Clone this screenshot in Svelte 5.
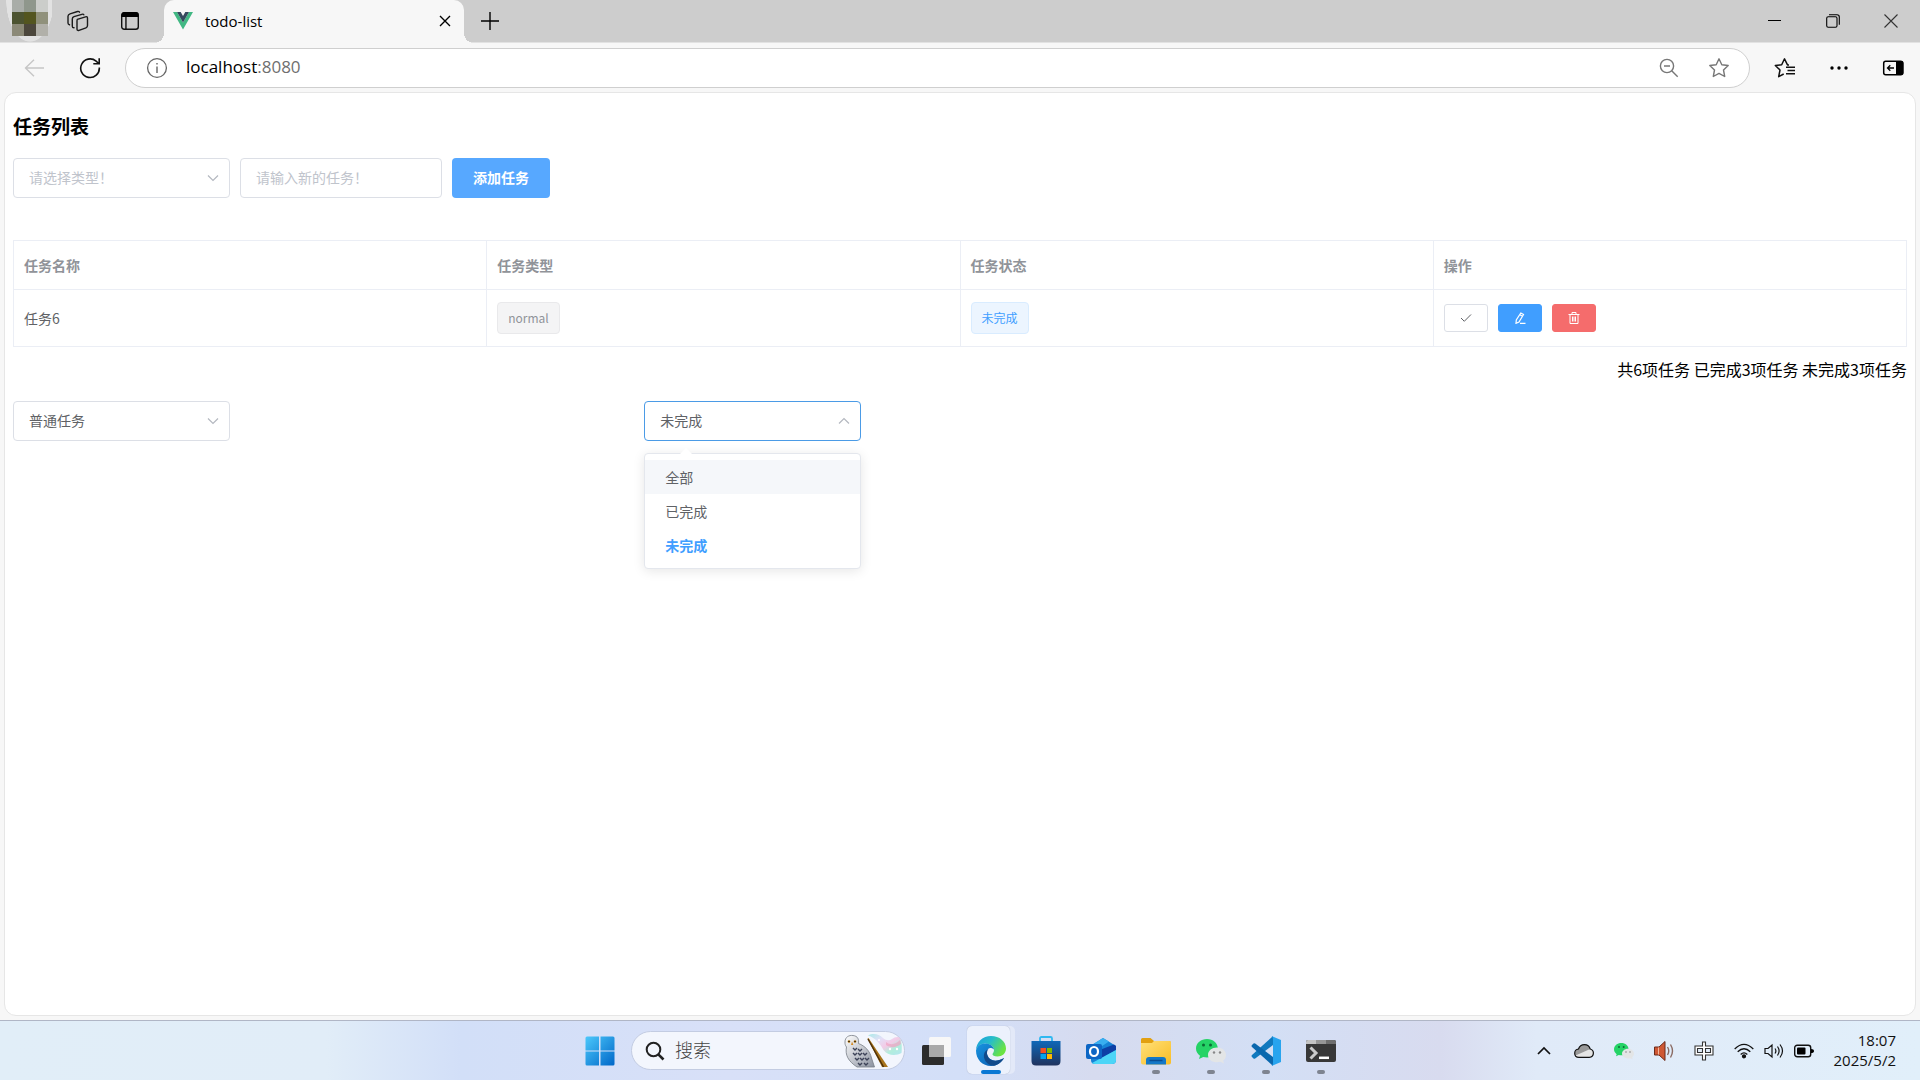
<script lang="ts">
    type Task = { id: number; name: string; type: string; done: boolean };

    let tasks = $state<Task[]>([
        { id: 1, name: '任务1', type: 'urgent', done: true },
        { id: 2, name: '任务2', type: 'normal', done: true },
        { id: 3, name: '任务3', type: 'urgent', done: true },
        { id: 4, name: '任务4', type: 'urgent', done: false },
        { id: 5, name: '任务5', type: 'urgent', done: false },
        { id: 6, name: '任务6', type: 'normal', done: false }
    ]);

    const types = [
        { value: 'normal', label: '普通任务' },
        { value: 'urgent', label: '紧急任务' }
    ];
    const statuses = ['全部', '已完成', '未完成'];

    let newType = $state('');
    let newName = $state('');
    let typeFilter = $state('normal');
    let statusFilter = $state('未完成');
    let hovered = $state('全部');
    let open = $state(true);

    const visible = $derived(
        tasks.filter(
            (t) =>
                t.type === typeFilter &&
                (statusFilter === '全部' || t.done === (statusFilter === '已完成'))
        )
    );
    const doneCount = $derived(tasks.filter((t) => t.done).length);

    function addTask() {
        if (!newType || !newName.trim()) return;
        tasks.push({ id: Date.now(), name: newName.trim(), type: newType, done: false });
        newName = '';
    }

    function removeTask(id: number) {
        tasks = tasks.filter((t) => t.id !== id);
    }

    function pick(status: string) {
        statusFilter = status;
        open = false;
    }

    function toggleMenu(e: MouseEvent) {
        e.preventDefault();
        open = !open;
    }

    // colores del avatar, fila por fila
    const avatar = ['#a9ada8', '#8f978c', '#cbcdca', '#4c5330', '#53551f', '#90917b', '#8b8977', '#4c473c', '#b1b0a9'];
</script>

{#snippet arrow(up = false)}
    <svg class="arrow" class:up viewBox="0 0 14 14" aria-hidden="true">
        <path d="M2 4.500l5 5 5-5" fill="none" stroke="#b4b8c0" stroke-width="1.200" />
    </svg>
{/snippet}

{#snippet wechat(size: number)}
    <svg width={size} height={size} viewBox="0 0 30 30" aria-hidden="true">
        <path d="M11 3C5 3 0 7 0 12.500c0 3 1.500 5.500 4 7.200L3 23l4.200-2c1.200.3 2.500.5 3.800.5 6 0 10.800-4 10.800-9.200S17 3 11 3z" fill="#25d366" />
        <circle cx="7.500" cy="9" r="1.500" fill="#0b6b35" />
        <circle cx="14.500" cy="9" r="1.500" fill="#0b6b35" />
        <path d="M21 11.500c-5 0-9 3.200-9 7.400s4 7.400 9 7.400c1.200 0 2.300-.2 3.300-.5L28 27.500l-.8-3c1.800-1.400 2.800-3.300 2.800-5.600 0-4.200-4-7.400-9-7.400z" fill="#e3e5e6" />
        <circle cx="18" cy="16.500" r="1.200" fill="#888" />
        <circle cx="24" cy="16.500" r="1.200" fill="#888" />
    </svg>
{/snippet}

<div class="screen">
    <header class="tabbar">
        <div class="profile">
            <div class="avatar">
                {#each avatar as color}
                    <i style:background={color}></i>
                {/each}
            </div>
        </div>
        <button class="tab-btn" aria-label="工作区">
            <svg width="22" height="22" viewBox="0 0 22 22" fill="none" stroke="#1b1b1b" stroke-width="1.400" stroke-linejoin="round" stroke-linecap="round">
                <path d="M10.300 9.400l8.200-2.600q2-.6 2 1.400v7.400q0 1.700-1.500 2.200l-7 2.500q-2 .6-2-1.300v-7.600q0-1.600.3-2z" />
                <path d="M16.800 4.800q-.4-1-2-.5L7 6.700Q5.300 7.300 5.300 9v7.200q0 1.500 1.700 1.600" />
                <path d="M12.500 2.200q-.6-1.100-2-.7L3 3.800Q1 4.400 1 6.300v6.800q0 1.300 1.500 1.700" />
            </svg>
        </button>
        <button class="tab-btn" aria-label="标签操作菜单">
            <svg width="20" height="20" viewBox="0 0 20 20">
                <rect x="1.700" y="1.700" width="16.600" height="16.600" rx="2.500" fill="none" stroke="#111" stroke-width="1.400" />
                <path d="M1.500 6V4a3 3 0 0 1 3-3h11a3 3 0 0 1 3 3v2zM5.300 6h1.300v12H5.300z" fill="#000" />
            </svg>
        </button>
        <div class="tab">
            <svg width="20" height="18" viewBox="0 0 20 18" aria-hidden="true">
                <path d="M0 0h4l6 10.500L16 0h4L10 17.500z" fill="#41b883" />
                <path d="M4 0h3.700L10 4l2.300-4H16l-6 10.500z" fill="#35495e" />
            </svg>
            <span>todo-list</span>
            <button aria-label="关闭标签页">
                <svg width="12" height="12" viewBox="0 0 12 12"><path d="M1 1l10 10M11 1L1 11" stroke="#000" stroke-width="1.400" /></svg>
            </button>
        </div>
        <button class="tab-btn" aria-label="新建标签页">
            <svg width="18" height="18" viewBox="0 0 18 18"><path d="M9 0v18M0 9h18" stroke="#000" stroke-width="1.400" /></svg>
        </button>
        <div class="window-controls">
            <button aria-label="最小化">
                <svg width="14" height="14" viewBox="0 0 14 14"><path d="M0 6.500h13" stroke="#000" /></svg>
            </button>
            <button aria-label="还原">
                <svg width="14" height="14" viewBox="0 0 14 14" fill="none" stroke="#000" stroke-width="1.100">
                    <rect x=".7" y="2.700" width="10.300" height="10.500" rx="1.500" />
                    <path d="M3 .7h8q2.300 0 2.300 2.300v7.800" />
                </svg>
            </button>
            <button aria-label="关闭">
                <svg width="14" height="14" viewBox="0 0 14 14"><path d="M.5.500l13 13M13.500.500l-13 13" stroke="#333" stroke-width="1.100" /></svg>
            </button>
        </div>
    </header>

    <div class="toolbar">
        <button class="nav-btn" aria-label="后退" disabled>
            <svg width="20" height="18" viewBox="0 0 20 18" fill="none" stroke="#c6c6c6" stroke-width="1.400"><path d="M20 9H1.500M10 .7L1.500 9l8.500 8.300" /></svg>
        </button>
        <button class="nav-btn" aria-label="刷新">
            <svg width="22" height="22" viewBox="0 0 22 22" fill="none" stroke="#111" stroke-width="1.600"><path d="M20.300 10.500a9.300 9.300 0 1 1-3.200-6.300l2.600 2.300M20.200 1.200v5.600h-5.900" /></svg>
        </button>
        <div class="address">
            <svg width="22" height="22" viewBox="0 0 22 22" fill="none" stroke="#666" aria-hidden="true">
                <circle cx="11" cy="11" r="9.400" stroke-width="1.300" />
                <path d="M11 9.500v6.500M11 6v1.600" stroke-width="1.400" />
            </svg>
            <span class="url">localhost<span class="port">:8080</span></span>
            <button aria-label="缩小">
                <svg width="20" height="20" viewBox="0 0 20 20" fill="none" stroke="#777" stroke-width="1.400"><circle cx="8" cy="8" r="6.600" /><path d="M5 8h6M12.700 12.700l6 6" /></svg>
            </button>
            <button aria-label="收藏此页">
                <svg width="22" height="22" viewBox="0 0 22 22" fill="none" stroke="#777" stroke-width="1.400" stroke-linejoin="round"><path d="M11 1.800l2.800 5.900 6.400.8-4.700 4.500 1.200 6.500L11 16.400l-5.700 3.100 1.200-6.500L1.800 8.500l6.400-.8z" /></svg>
            </button>
        </div>
        <button class="tool-btn" aria-label="收藏夹">
            <svg width="22" height="22" viewBox="0 0 22 22" fill="none" stroke="#111" stroke-width="1.500" stroke-linejoin="round"><path d="M15 7.900h-1.500L10.500 1.800 7.700 7.700l-6.400.8L6 13l-1.300 6.700 5-2.700M12 10.300h9M13.500 13.500H21M12 16.700h9" /></svg>
        </button>
        <button class="tool-btn" aria-label="设置及其他">
            <svg width="18" height="4" viewBox="0 0 18 4"><circle cx="2" cy="2" r="1.700" /><circle cx="9" cy="2" r="1.700" /><circle cx="16" cy="2" r="1.700" /></svg>
        </button>
        <button class="tool-btn" aria-label="侧边栏">
            <svg width="22" height="16" viewBox="0 0 22 16"><rect x="1.700" y="1.200" width="19" height="13.600" rx="2" fill="none" stroke="#000" stroke-width="1.500" /><path d="M14 1h5.500a2 2 0 0 1 2 2v10a2 2 0 0 1-2 2H14z" /><path d="M12 8H5.500M8.300 5.200L5.500 8l2.800 2.800" fill="none" stroke="#000" stroke-width="1.300" /></svg>
        </button>
    </div>

    <main class="page">
        <h3>任务列表</h3>

        <form class="new-task" onsubmit={(e) => { e.preventDefault(); addTask(); }}>
            <div class="select">
                <select bind:value={newType} class:empty={!newType} aria-label="任务类型">
                    <option value="" disabled hidden>请选择类型！</option>
                    {#each types as t}
                        <option value={t.value}>{t.label}</option>
                    {/each}
                </select>
                {@render arrow()}
            </div>
            <input type="text" bind:value={newName} placeholder="请输入新的任务！" aria-label="新的任务" />
            <button type="submit" class="btn-add">添加任务</button>
        </form>

        <table>
            <thead>
                <tr>
                    <th>任务名称</th>
                    <th>任务类型</th>
                    <th>任务状态</th>
                    <th>操作</th>
                </tr>
            </thead>
            <tbody>
                {#each visible as task (task.id)}
                    <tr>
                        <td>{task.name}</td>
                        <td><span class="tag info">{task.type}</span></td>
                        <td><span class="tag">{task.done ? '已完成' : '未完成'}</span></td>
                        <td>
                            <div class="actions">
                                <button aria-label="完成" onclick={() => (task.done = true)}>
                                    <svg width="12" height="12" viewBox="0 0 12 12" fill="none" stroke="#606266"><path d="M1 6l3.300 3.300L11 2.500" /></svg>
                                </button>
                                <button class="primary" aria-label="编辑">
                                    <svg width="12" height="12" viewBox="0 0 12 12" fill="none" stroke="#fff" stroke-width="1.200"><path d="M6.800 1l2.700 1.500L5 10l-3 1.300.3-3.300zM5.800 2.800L8.500 4.300M6 11.400h5.500" /></svg>
                                </button>
                                <button class="danger" aria-label="删除" onclick={() => removeTask(task.id)}>
                                    <svg width="12" height="12" viewBox="0 0 12 12" fill="none" stroke="#fff"><path d="M.5 2.500h11M4 2.500v-2h4v2M2 2.500v9h8v-9M4.500 4.500v5M6 4.500v5M7.500 4.500v5" /></svg>
                                </button>
                            </div>
                        </td>
                    </tr>
                {/each}
            </tbody>
        </table>

        <p class="summary">
            共{tasks.length}项任务 已完成{doneCount}项任务 未完成{tasks.length - doneCount}项任务
        </p>

        <div class="filters">
            <div class="select">
                <select bind:value={typeFilter} aria-label="按类型筛选">
                    {#each types as t}
                        <option value={t.value}>{t.label}</option>
                    {/each}
                </select>
                {@render arrow()}
            </div>
            <div class="select" class:open>
                <select bind:value={statusFilter} onmousedown={toggleMenu} aria-label="按状态筛选">
                    {#each statuses as s}
                        <option value={s}>{s}</option>
                    {/each}
                </select>
                {@render arrow(open)}
                {#if open}
                    <div class="popper">
                        {#each statuses as s}
                            <button
                                class:hover={hovered === s}
                                class:selected={statusFilter === s}
                                onmouseenter={() => (hovered = s)}
                                onclick={() => pick(s)}
                            >{s}</button>
                        {/each}
                    </div>
                {/if}
            </div>
        </div>
    </main>

    <footer class="taskbar">
        <div class="dock">
            <button class="app" aria-label="开始">
                <svg width="30" height="30" viewBox="0 0 30 30">
                    <defs><linearGradient id="win" x1="0" y1="0" x2="1" y2="1"><stop offset="0" stop-color="#4cc8fb" /><stop offset="1" stop-color="#0067c8" /></linearGradient></defs>
                    <path d="M2 .5h12v14H.5V2Q.5.500 2 .5zM15.500.500H28q1.500 0 1.500 1.500v12.500h-14zM.5 15.500H14v14H2q-1.500 0-1.500-1.500zM15.500 15.500h14V28q0 1.500-1.500 1.500H15.500z" fill="url(#win)" />
                </svg>
            </button>
            <label class="search">
                <svg width="20" height="20" viewBox="0 0 20 20" fill="none" stroke="#222" stroke-width="2"><circle cx="8.500" cy="8.500" r="6.800" /><path d="M13.300 13.300l5.200 5.200" stroke-width="2.600" /></svg>
                <input type="text" placeholder="搜索" aria-label="搜索" />
                <svg width="60" height="34" viewBox="0 0 60 34">
                    <defs>
                        <linearGradient id="magic" x1="0" y1="0" x2="1" y2="1"><stop offset="0" stop-color="#9ee8e4" /><stop offset=".3" stop-color="#e0dcf6" /><stop offset=".55" stop-color="#f3c3e2" /><stop offset=".75" stop-color="#a6ecd6" /><stop offset="1" stop-color="#a8e2ee" /></linearGradient>
                        <linearGradient id="owl" x1="0" y1="0" x2="1" y2="1"><stop offset="0" stop-color="#fff" /><stop offset="1" stop-color="#8b92a0" /></linearGradient>
                    </defs>
                    <path d="M2 8C2 3 6 1 10 1.500c5 .5 6 4 5.500 8C22 12 27 17 28.500 24l3 9H14C5 27 2 21 3.500 13 2 11 2 10 2 8z" fill="url(#owl)" stroke="#777d87" stroke-width=".8" />
                    <path d="M9 7.500l1.400 3.500H8z" fill="#d48a22" />
                    <circle cx="6" cy="7.500" r="1.300" fill="#c8861b" /><circle cx="12" cy="7.500" r="1.300" fill="#c8861b" />
                    <circle cx="6" cy="7.500" r=".7" /><circle cx="12" cy="7.500" r=".7" />
                    <path d="M10 14l2 2 2-2M15 15l2 2 2-2M10 19l2 2 2-2M15 19l2 2 2-2M20 19l2 2 2-2M12 24l2 2 2-2M17 24l2 2 2-2M22 24l2 2 2-2M15 29l2 2 2-2M21 29l2 2 2-2" fill="none" stroke="#3d4358" stroke-width="1.400" />
                    <path d="M25 1.500c6-3 11-1 15 2.500 3 2.500 6 3 9 1 2.500-2 6-3 8-1 2 4 2 10 1.500 15-5 3-14 3-18-3-3-6-8-12-15.500-14.500z" fill="url(#magic)" opacity=".85" />
                    <path d="M43 8c5 4 10 2 14-2l1 4c-5 4-10 4-15 1z" fill="#f09bbd" opacity=".6" />
                    <circle cx="47" cy="15" r="1.200" fill="#fff" /><circle cx="54" cy="15" r="1.200" fill="#fff" /><circle cx="36" cy="6" r="1" fill="#fff" />
                    <path d="M24.500 4.500L39 33h6L25.500 4z" fill="#a8741b" /><path d="M25 5L40.500 33" stroke="#4e310b" stroke-width="1.500" />
                </svg>
            </label>
            <button class="app" aria-label="任务视图">
                <svg width="30" height="30" viewBox="0 0 30 30">
                    <rect x="1" y="9" width="22" height="20" rx="1.500" fill="#2c2c2c" />
                    <rect x="8" y="1" width="22" height="20" rx="1.500" fill="#f7f7f7" />
                    <path d="M8 9h15v12H9.500Q8 21 8 19.500z" fill="#a9a9a9" />
                </svg>
            </button>
            <button class="app active" aria-label="Edge">
                <svg width="30" height="30" viewBox="0 0 30 30">
                    <defs>
                        <linearGradient id="edge1" x1="0" y1="0" x2="1" y2=".5"><stop offset="0" stop-color="#1b9ddf" /><stop offset=".5" stop-color="#27bdc9" /><stop offset="1" stop-color="#6ae443" /></linearGradient>
                        <linearGradient id="edge2" x1="0" y1="0" x2="1" y2="1"><stop offset="0" stop-color="#1794e0" /><stop offset="1" stop-color="#0b57ad" /></linearGradient>
                    </defs>
                    <path d="M15 0c8.500 0 15 5.500 15 12.500 0 5-4 8-8.500 8-3.500 0-5-1.200-5-2.300 0-1 1.500-1.700 1.500-4.200C18 10.500 14 7.500 9 7.500 4.500 7.500 1 10.500 0 14.500 0 6 7 0 15 0z" fill="url(#edge1)" />
                    <path d="M0 14.500C1 10 4.500 7.500 9 7.500c5 0 8.500 2.700 9 6-5.500-4-8.500 1-6.500 6C13.500 25 20 26.500 28 22c-3 5-7.500 8-13 8C6.500 30 0 23.500 0 14.500z" fill="url(#edge2)" />
                    <path d="M11.500 19.500C10.500 17 11 14.500 12.500 13c-4 1.500-5.500 6-4 10 1.500 4 5 6.500 9 6.800C22 29 26 26 28 22c-8 4.500-14.500 3-16.500-2.500z" fill="#114a8b" />
                </svg>
            </button>
            <button class="app" aria-label="Microsoft Store">
                <svg width="30" height="30" viewBox="0 0 30 30">
                    <defs><linearGradient id="store" x1="0" y1="0" x2="0" y2="1"><stop offset="0" stop-color="#0f68b8" /><stop offset="1" stop-color="#20335e" /></linearGradient></defs>
                    <path d="M9 6V2.500Q9 1 10.500 1h9Q21 1 21 2.500V6" fill="none" stroke="#2fb8f0" stroke-width="1.800" />
                    <path d="M.5 5h29v20q0 4.500-4.500 4.500H5Q.5 29.500.5 25z" fill="url(#store)" />
                    <path d="M9.500 12H15v5H9.500z" fill="#f25022" /><path d="M16 12h5v5h-5z" fill="#7fba00" /><path d="M9.500 18H15v5H9.500z" fill="#00a4ef" /><path d="M16 18h5v5h-5z" fill="#ffb900" />
                </svg>
            </button>
            <button class="app" aria-label="Outlook">
                <svg width="30" height="30" viewBox="0 0 30 30">
                    <path d="M5 9.500L17 2l13 8v14q0 4-4 4H9q-4 0-4-4z" fill="#1683d6" />
                    <path d="M5 9.500L17 2l6 3.500L10 14z" fill="#38aef0" />
                    <path d="M11 15L28 8.500l2 1.500v4L14 23z" fill="#0d3fa5" />
                    <path d="M30 14v10q0 4-4 4H9q-2 0-3-1z" fill="#4cd5f7" />
                    <rect y="8" width="16" height="15" rx="2" fill="#0d66c4" />
                    <ellipse cx="8" cy="15.500" rx="4" ry="4.500" fill="none" stroke="#fff" stroke-width="2.200" />
                </svg>
            </button>
            <button class="app running" aria-label="文件资源管理器">
                <svg width="30" height="30" viewBox="0 0 30 30">
                    <defs><linearGradient id="folder" x1="0" y1="0" x2="1" y2="1"><stop offset="0" stop-color="#ffe07a" /><stop offset="1" stop-color="#f9bd25" /></linearGradient></defs>
                    <path d="M0 3.500Q0 2 1.500 2h8L13 5h15q2 0 2 2v5H0z" fill="#e2a011" />
                    <path d="M0 7h11l2-2h15.500Q30 5 30 6.500v20Q30 28.500 28 28.500H2q-2 0-2-2z" fill="url(#folder)" />
                    <path d="M5 28.500V24q0-3 3-3h14q3 0 3 3v4.500z" fill="#1478c7" /><path d="M8.500 24.500h13" stroke="#0a4d92" stroke-width="1.500" />
                </svg>
            </button>
            <button class="app running" aria-label="微信">{@render wechat(30)}</button>
            <button class="app running" aria-label="Visual Studio Code">
                <svg width="30" height="30" viewBox="0 0 30 30">
                    <path d="M22 0L1 19q-1 1 0 2l1.500 1.500q.8.600 1.700 0L22 9z" fill="#1079be" />
                    <path d="M22 30L1 11q-1-1 0-2l1.500-1.500q.8-.6 1.700 0L22 21z" fill="#0a68ae" />
                    <path d="M20.500 0L30 4v22l-9.500 4q1.500-1 1.500-3V3q0-2-1.500-3z" fill="#28a4ee" />
                </svg>
            </button>
            <button class="app running" aria-label="终端">
                <svg width="30" height="30" viewBox="0 0 30 30">
                    <rect y="4" width="30" height="22" rx="2" fill="#383838" />
                    <path d="M2 4h8v4H0V6q0-2 2-2z" fill="#c4c4c4" /><path d="M10 4h10v4H10z" fill="#969696" /><path d="M20 4h8q2 0 2 2v2H20z" fill="#6e6e6e" />
                    <path d="M4.500 11.500L10 17l-5.500 5.500" fill="none" stroke="#ccc" stroke-width="3" /><path d="M13 21.800h10" stroke="#fff" stroke-width="2.500" />
                </svg>
            </button>
        </div>
        <div class="tray">
            <button aria-label="显示隐藏的图标">
                <svg width="14" height="10" viewBox="0 0 14 10"><path d="M1 8l6-6 6 6" fill="none" stroke="#111" stroke-width="1.700" /></svg>
            </button>
            <button aria-label="OneDrive">
                <svg width="20" height="14" viewBox="0 0 20 14"><path d="M4.500 5C5.500 2 8 .7 10.500.700c3 0 5 1.800 5.700 4.300 2 .5 3.200 2 3.200 4.100 0 2.500-1.800 4.200-4.200 4.200H5C2.500 13.300.700 11.500.700 9.200.700 7 2.300 5.300 4.500 5z" fill="#e5e5e5" /><path d="M4.500 5C5.500 2 8 .7 10.500.700c3 0 5 1.800 5.700 4.300L1.500 11.500C.2 9 1.500 5.500 4.500 5z" fill="#999" /><path d="M4.500 5C5.500 2 8 .7 10.500.700c3 0 5 1.800 5.700 4.300 2 .5 3.200 2 3.200 4.100 0 2.500-1.800 4.200-4.200 4.200H5C2.500 13.300.700 11.500.700 9.200.700 7 2.300 5.300 4.500 5z" fill="none" stroke="#111" stroke-width="1.200" /></svg>
            </button>
            <button aria-label="微信">{@render wechat(20)}</button>
            <button aria-label="音频">
                <svg width="20" height="20" viewBox="0 0 20 20"><path d="M.5 6H5l6-5.500v19L5 14H.5z" fill="#cf5834" stroke="#6b2b1b" /><path d="M4.500 6.500v7" stroke="#f3b79c" /><path d="M13.500 6q2.500 4 0 8M16.500 3.500q4 6.500 0 13" fill="none" stroke="#8a6a62" stroke-width="1.400" /></svg>
            </button>
            <button aria-label="输入法">
                <svg width="20" height="20" viewBox="0 0 20 20" fill="#fff" stroke="#333" stroke-width="1.100" fill-rule="evenodd"><path d="M8.500 1h3v4H19v9h-7.500v5h-3v-5H1V5h7.500zM3.500 7.500v4h5v-4zM11.500 7.500v4h5v-4z" /></svg>
            </button>
            <div class="system">
                <svg width="20" height="16" viewBox="0 0 20 16" fill="none" stroke="#111" stroke-width="1.300" aria-label="WLAN"><path d="M.7 6q9.300-9.300 18.600 0M3.700 8.800q6.300-6.200 12.600 0M6.700 11.500q3.300-3.200 6.600 0" /><circle cx="10" cy="13.300" r="1.500" fill="#111" /></svg>
                <svg width="20" height="16" viewBox="0 0 20 16" fill="none" stroke="#111" stroke-width="1.200" aria-label="音量"><path d="M1 5.500h3L8 2v12L4 10.500H1zM11 5.500q1.800 2.500 0 5M13.500 3.500q3.200 4.500 0 9M16 1.500q5 6.500 0 13" /></svg>
                <svg width="20" height="14" viewBox="0 0 20 14" aria-label="电池"><rect x=".7" y="1.200" width="16" height="11.600" rx="2.500" fill="none" stroke="#111" stroke-width="1.400" /><rect x="3" y="3.500" width="8.500" height="7" rx="1" /><path d="M17 5q3 0 3 2t-3 2z" /></svg>
            </div>
            <time datetime="2025-05-02T18:07">18:07<br />2025/5/2</time>
        </div>
    </footer>
</div>

<style>
    :global(body) {
        margin: 0;
        background: #f7f7f7;
    }

    .screen {
        display: flex;
        flex-direction: column;
        min-height: 100vh;
        font-family: 'Noto Sans', 'Noto Sans CJK SC', sans-serif;
    }

    button,
    input,
    select {
        box-sizing: border-box;
        margin: 0;
        font-family: inherit;
    }

    button {
        display: flex;
        align-items: center;
        justify-content: center;
        padding: 0;
        border: 0;
        background: none;
        cursor: pointer;
    }

    svg {
        display: block;
        flex: none;
    }

    /* navegador */
    .tabbar {
        display: flex;
        height: 42px;
        background: #cdcdcd;
        border-bottom: 1px solid #e2e2e2;
    }

    .profile {
        width: 52px;
        background: radial-gradient(ellipse 24px 42px at 30px 0, #e2e2e2 98%, transparent);
    }

    .avatar {
        display: grid;
        grid-template-columns: repeat(3, 12px);
        grid-auto-rows: 12px;
        margin-left: 12px;
    }

    .tab-btn {
        width: 52px;
    }

    .tab {
        position: relative;
        display: flex;
        align-items: center;
        width: 300px;
        height: 43px;
        margin-left: 8px;
        padding: 0 13px 2px 9px;
        box-sizing: border-box;
        background: #f7f7f7;
        border-radius: 10px 10px 0 0;
        font-family: 'Open Sans', sans-serif;
        font-size: 15px;
    }

    .tab::before,
    .tab::after {
        content: '';
        position: absolute;
        bottom: 0;
        width: 10px;
        height: 10px;
    }

    .tab::before {
        right: 100%;
        background: radial-gradient(circle at 0 0, transparent 10px, #f7f7f7 10px);
    }

    .tab::after {
        left: 100%;
        background: radial-gradient(circle at 100% 0, transparent 10px, #f7f7f7 10px);
    }

    .tab span {
        flex: 1;
        padding-left: 12px;
    }

    .window-controls {
        display: flex;
        margin-left: auto;
    }

    .window-controls button {
        width: 58px;
    }

    .toolbar {
        display: flex;
        align-items: center;
        height: 49px;
        padding-left: 6px;
    }

    .nav-btn {
        width: 56px;
        height: 40px;
    }

    .address {
        display: flex;
        flex: 1;
        align-items: center;
        box-sizing: border-box;
        height: 40px;
        margin: 0 8px 0 7px;
        padding: 0 5px 0 20px;
        background: #fff;
        border: 1px solid #cfcfcf;
        border-radius: 20px;
        font-family: 'Open Sans', sans-serif;
        font-size: 17px;
    }

    .url {
        flex: 1;
        padding: 0 0 2px 18px;
    }

    .port {
        color: #6f6f6f;
    }

    .address button {
        width: 50px;
        height: 38px;
    }

    .tool-btn {
        width: 54px;
        height: 40px;
    }

    /* aplicación */
    .page {
        flex: 1;
        margin: 0 4px 4px;
        padding: 20px 8px 0;
        background: #fff;
        border: 1px solid #e6e6e6;
        border-radius: 12px;
        font-family: 'Noto Sans CJK SC', sans-serif;
        font-size: 14px;
        color: #606266;
    }

    h3 {
        margin: 0 0 19px;
        color: #000;
        font-size: 19px;
        line-height: 26px;
    }

    .new-task {
        display: flex;
        gap: 10px;
        margin-bottom: 42px;
    }

    .select {
        position: relative;
        width: 217px;
    }

    .page select,
    .page input {
        width: 100%;
        height: 40px;
        padding: 0 15px 2px;
        background: #fff;
        border: 1px solid #dcdfe6;
        border-radius: 4px;
        color: #606266;
        font-size: 14px;
        outline: none;
        appearance: none;
    }

    .page input {
        width: 202px;
    }

    .page select.empty,
    .page input::placeholder {
        color: #c0c4cc;
    }

    .page .open select {
        border-color: #4b9be6;
    }

    .arrow {
        position: absolute;
        top: 13px;
        right: 10px;
        width: 14px;
        height: 14px;
        pointer-events: none;
    }

    .arrow.up {
        transform: rotate(180deg);
    }

    .btn-add {
        width: 98px;
        padding-bottom: 2px;
        background: #57a8ff;
        border-radius: 4px;
        color: #fff;
        font-size: 14px;
        font-weight: 700;
    }

    table {
        width: 100%;
        table-layout: fixed;
        border-collapse: collapse;
    }

    th,
    td {
        height: 56px;
        padding: 0 10px;
        border: 1px solid #ebeef5;
        line-height: 24px;
        text-align: left;
    }

    th {
        height: 48px;
        color: #909399;
    }

    .tag {
        display: inline-block;
        padding: 0 10px;
        background: #ecf5ff;
        border: 1px solid #d9ecff;
        border-radius: 4px;
        color: #409eff;
        font-size: 12px;
        line-height: 30px;
    }

    .tag.info {
        background: #f4f4f5;
        border-color: #e9e9eb;
        color: #909399;
    }

    .actions {
        display: flex;
        gap: 10px;
    }

    .actions button {
        width: 44px;
        height: 28px;
        border: 1px solid #dcdfe6;
        border-radius: 3px;
    }

    .actions .primary {
        background: #409eff;
        border-color: #409eff;
    }

    .actions .danger {
        background: #f56c6c;
        border-color: #f56c6c;
    }

    .summary {
        margin: 10px 0 20px;
        color: #000;
        font-size: 16px;
        line-height: 24px;
        text-align: right;
    }

    .filters {
        display: grid;
        grid-template-columns: repeat(3, 1fr);
    }

    .popper {
        position: absolute;
        top: 52px;
        left: 0;
        right: 0;
        padding: 6px 0;
        background: #fff;
        border: 1px solid #e4e7ed;
        border-radius: 4px;
        box-shadow: 0 2px 12px rgba(0, 0, 0, 0.1);
    }

    .popper::before {
        content: '';
        position: absolute;
        top: -6px;
        left: 35px;
        border: 6px solid transparent;
        border-top: 0;
        border-bottom-color: #fff;
    }

    .popper button {
        justify-content: flex-start;
        width: 100%;
        height: 34px;
        padding: 0 20px;
        color: #606266;
        font-size: 14px;
    }

    .popper .hover {
        background: #f5f7fa;
    }

    .popper .selected {
        color: #409eff;
        font-weight: 700;
    }

    /* barra de tareas */
    .taskbar {
        display: grid;
        grid-template-columns: 1fr auto 1fr;
        align-items: center;
        height: 59px;
        border-top: 1px solid #b0b6c6;
        background: linear-gradient(90deg, #e1eef8 0%, #e1edf8 17%, #d2dff8 24%, #d8e0f8 38%, #d3dff8 50%, #d6dbef 57%, #d3dff5 66%, #d8dbef 75%, #e0eaf8 80%, #e1effa 100%);
    }

    .dock {
        display: flex;
        grid-column: 2;
        align-items: center;
    }

    .app {
        position: relative;
        width: 55px;
        height: 59px;
    }

    .app svg {
        z-index: 1;
    }

    .app.active::before {
        content: '';
        position: absolute;
        top: 5px;
        left: 4px;
        width: 43px;
        height: 48px;
        background: #ecf1fc;
        border-radius: 5px;
        box-shadow: 0 0 1px #9aa5be, 5px 0 0 #e3e9f8;
    }

    .app.active::after,
    .app.running::after {
        content: '';
        position: absolute;
        bottom: 6px;
        left: 24px;
        width: 8px;
        height: 4px;
        background: #7e8490;
        border-radius: 2px;
    }

    .app.active::after {
        left: 18px;
        width: 20px;
        background: #0a78d4;
    }

    .search {
        display: flex;
        align-items: center;
        box-sizing: border-box;
        width: 274px;
        height: 39px;
        margin: 0 3px 0 4px;
        padding: 0 1px 0 13px;
        background: #f3f6fd;
        border: 1px solid #c3cce2;
        border-radius: 20px;
    }

    .search input {
        flex: 1;
        min-width: 0;
        padding: 0 0 2px 10px;
        border: 0;
        background: none;
        font-size: 18px;
        font-weight: 300;
        outline: none;
    }

    .search input::placeholder {
        color: #444;
    }

    .tray {
        display: flex;
        align-items: center;
        justify-content: flex-end;
        padding-right: 24px;
    }

    .tray button {
        width: 40px;
        height: 40px;
    }

    .system {
        display: flex;
        gap: 10px;
        align-items: center;
        padding-left: 10px;
    }

    time {
        width: 82px;
        padding-bottom: 2px;
        font-family: 'Open Sans', sans-serif;
        font-size: 15px;
        line-height: 20px;
        text-align: right;
        color: #111;
    }
</style>
